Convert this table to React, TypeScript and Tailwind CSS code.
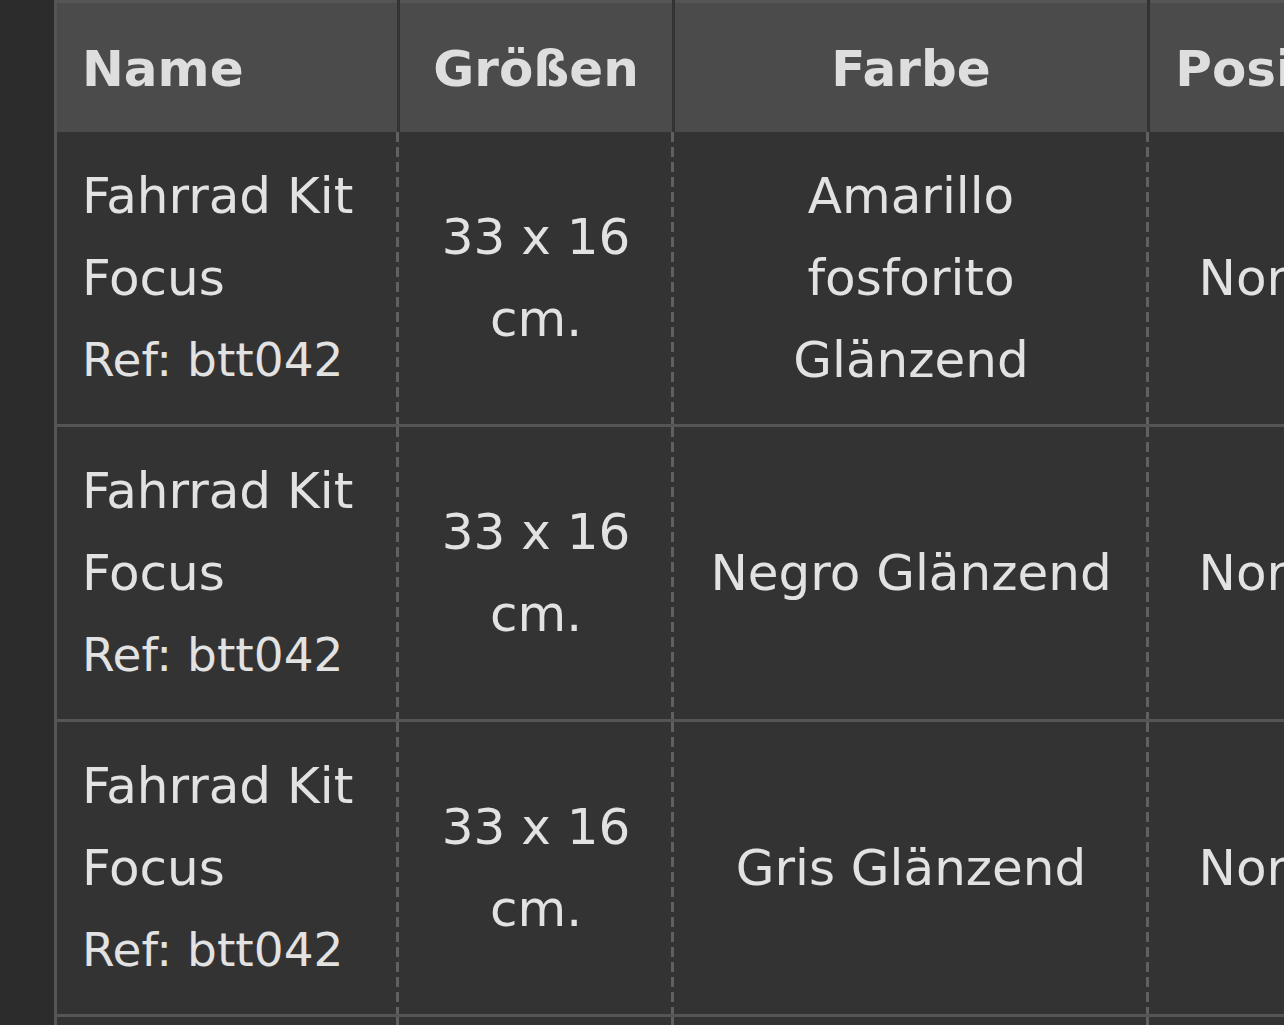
import React from 'react';

interface Row {
  name: string;
  ref: string;
  size: string;
  color: string;
  position: string;
}

const rows: Row[] = [
  { name: 'Fahrrad Kit Focus', ref: 'Ref: btt042', size: '33 x 16 cm.', color: 'Amarillo fosforito Glänzend', position: 'Normal' },
  { name: 'Fahrrad Kit Focus', ref: 'Ref: btt042', size: '33 x 16 cm.', color: 'Negro Glänzend', position: 'Normal' },
  { name: 'Fahrrad Kit Focus', ref: 'Ref: btt042', size: '33 x 16 cm.', color: 'Gris Glänzend', position: 'Normal' },
];

const dashed =
  'bg-[repeating-linear-gradient(to_bottom,#606060_0_10px,transparent_10px_15px)] bg-no-repeat bg-right bg-[length:3px_100%]';

const App: React.FC = () => {
  return (
    <div className="w-[1284px] h-[1025px] overflow-hidden bg-[#2c2c2c] pl-[54px] font-['DejaVu_Sans',Verdana,sans-serif] text-[#e2e2e2]">
      <table className="table-fixed border-collapse bg-[#333333] border-t-[3px] border-l-[3px] border-[#555555] w-[1374px]">
        <colgroup>
          <col className="w-[343px]" />
          <col className="w-[275px]" />
          <col className="w-[475px]" />
          <col className="w-[281px]" />
        </colgroup>
        <thead>
          <tr className="bg-[#4b4b4b] h-[130px] text-[50px] font-bold text-[#dedede]">
            <th className="text-left pl-[25px] pr-[25px] pt-[4px] border-r-[3px] border-[#333333]">Name</th>
            <th className="text-center px-[25px] pt-[4px] border-r-[3px] border-[#333333]">Größen</th>
            <th className="text-center px-[25px] pt-[4px] border-r-[3px] border-[#333333]">Farbe</th>
            <th className="text-center px-[25px] pt-[4px]">Position</th>
          </tr>
        </thead>
        <tbody>
          {rows.map((r, i) => (
            <tr key={i} className="border-b-[3px] border-[#555555] text-[50px] leading-[82px] align-middle">
              <td className={`pl-[25px] pr-[25px] py-[23px] text-left ${dashed}`}>
                <div>{r.name}</div>
                <div className="text-[47px]">{r.ref}</div>
              </td>
              <td className={`px-[25px] text-center ${dashed}`}>{r.size}</td>
              <td className={`px-[25px] text-center ${dashed}`}>{r.color}</td>
              <td className="px-[25px] text-center">{r.position}</td>
            </tr>
          ))}
          <tr className="h-[40px]">
            <td className={dashed}></td>
            <td className={dashed}></td>
            <td className={dashed}></td>
            <td></td>
          </tr>
        </tbody>
      </table>
    </div>
  );
};

export default App;
